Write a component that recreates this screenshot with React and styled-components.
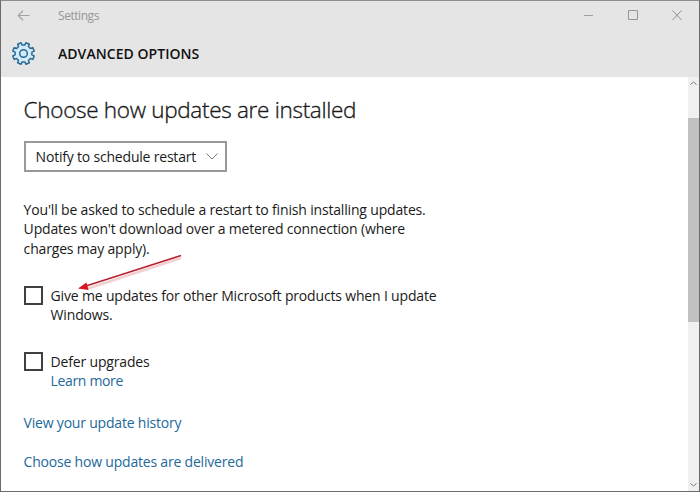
import styled, { createGlobalStyle } from "styled-components";

const GlobalStyle = createGlobalStyle`
  * {
    box-sizing: border-box;
  }

  body {
    margin: 0;
    overflow: hidden;
    font-family: "Open Sans", "Noto Sans", sans-serif;
    color: #1a1a1a;
  }
`;

const Window = styled.div`
  width: 700px;
  height: 492px;
  display: flex;
  flex-direction: column;
  background-color: white;
  border: 1px solid #6b6b6b;
  border-top-color: #8e8e8e;
`;

const Header = styled.header`
  height: 76px;
  background-color: #e5e5e5;
`;

const TitleBar = styled.div`
  height: 29px;
  display: flex;
  align-items: center;
  padding-left: 16px;
  color: #979797;
`;

const WindowTitle = styled.span`
  flex: 1;
  margin-left: 28px;
  font-size: 12px;
  letter-spacing: -0.45px;
`;

const WindowButtons = styled.div`
  display: flex;
  gap: 32px;
  padding-right: 16px;
`;

const PageBar = styled.div`
  height: 47px;
  display: flex;
  align-items: center;
  padding: 0 0 0 10px;
`;

const PageTitle = styled.h1`
  margin: 0 0 0 22px;
  font-size: 14px;
  font-weight: 600;
  letter-spacing: 0.05px;
  color: #111;
`;

const Body = styled.div`
  flex: 1;
  display: flex;
  min-height: 0;
`;

const Content = styled.main`
  flex: 1;
  padding: 17px 0 0 22.6px;
`;

const Heading = styled.h2`
  margin: 0;
  font-size: 22.5px;
  font-weight: 300;
  line-height: 32px;
  letter-spacing: -0.3px;
  white-space: nowrap;
  -webkit-text-stroke: 0.35px #1a1a1a;
`;

const Select = styled.button`
  width: 203px;
  height: 31px;
  margin-top: 15px;
  padding: 0 7px 1px 10px;
  display: flex;
  align-items: center;
  justify-content: space-between;
  border: 2px solid #999;
  background-color: white;
  color: inherit;
  font-family: inherit;
  font-size: 14px;
  letter-spacing: -0.2px;
  white-space: nowrap;
`;

const Text = styled.p`
  margin: 0;
  font-size: 14px;
  line-height: 19.4px;
  letter-spacing: -0.17px;
  white-space: nowrap;
`;

const Line = styled.span`
  display: block;
`;

const Description = styled(Text)`
  margin-top: 28px;
`;

const Option = styled.div`
  display: flex;
  gap: 8px;
  margin-top: ${(props) => props.$top}px;
`;

const Checkbox = styled.span`
  width: 19px;
  height: 19px;
  border: 2px solid #404040;
  background-color: white;
`;

const Link = styled.a`
  display: block;
  margin-top: ${(props) => props.$top || 0}px;
  font-size: 14px;
  line-height: 19.4px;
  letter-spacing: ${(props) => props.$spacing || -0.2}px;
  color: #22699a;
  white-space: nowrap;
`;

const Scrollbar = styled.div`
  width: 11px;
  display: flex;
  flex-direction: column;
  align-items: center;
  justify-content: space-between;
  background-color: #f0f0f0;
`;

const Track = styled.div`
  flex: 1;
  width: 100%;
  padding-top: 33px;
`;

const Thumb = styled.div`
  height: 204px;
  background-color: #c1c1c1;
`;

const ScrollButton = styled.div`
  padding: ${(props) => (props.$down ? "0 0 4px" : "2px 0 0")};
  line-height: 0;
`;

const Pointer = styled.svg`
  position: absolute;
  left: 74px;
  top: 250px;
  pointer-events: none;
`;

// outline of a cog with 8 teeth around (12, 12)
const cogPath = () => {
  const point = (radius, degrees) => {
    const angle = (degrees * Math.PI) / 180;
    return `${(12 + radius * Math.cos(angle)).toFixed(2)} ${(
      12 +
      radius * Math.sin(angle)
    ).toFixed(2)}`;
  };
  let d = "";
  for (let i = 0; i < 8; i++) {
    const a = i * 45 + 22.5;
    d += `${i ? "L" : "M"}${point(8.5, a - 13)}L${point(11, a - 10)}`;
    d += `L${point(11, a + 10)}L${point(8.5, a + 13)}`;
  }
  return d + "Z";
};

const CogIcon = () => (
  <svg width="25" height="25" viewBox="-0.5 -0.5 25 25" fill="#d3eaf8">
    <path
      d={cogPath()}
      stroke="#2c6b96"
      strokeWidth="1.5"
      strokeLinejoin="round"
    />
    <circle cx="12" cy="12" r="3.8" stroke="#2c6b96" strokeWidth="1.5" />
  </svg>
);

const BackIcon = () => (
  <svg width="13" height="11" fill="none" stroke="#a3a3a3" strokeWidth="1.2">
    <path d="M12.5 5.5H1M6 .8L1.2 5.5L6 10.2" />
  </svg>
);

const Chevron = ({ width, height, up, color }) => (
  <svg width={width} height={height} fill="none" stroke={color}>
    <path
      d={
        up
          ? `M.5 ${height - 0.5}L${width / 2} 1L${width - 0.5} ${height - 0.5}`
          : `M.5 .5L${width / 2} ${height - 1}L${width - 0.5} .5`
      }
    />
  </svg>
);

const App = () => {
  return (
    <>
      <GlobalStyle />
      <Window>
        <Header>
          <TitleBar>
            <BackIcon />
            <WindowTitle>Settings</WindowTitle>
            <WindowButtons>
              <svg width="12" height="11" stroke="#a0a0a0">
                <path d="M1 5.5H10" />
              </svg>
              <svg width="12" height="11" fill="none" stroke="#969696">
                <path d="M1.5 .5H10.5V9.5H1.5Z" />
              </svg>
              <svg width="12" height="11" fill="none" stroke="#929292">
                <path d="M1.5 .5L10.5 10M10.5 .5L1.5 10" />
              </svg>
            </WindowButtons>
          </TitleBar>
          <PageBar>
            <CogIcon />
            <PageTitle>ADVANCED OPTIONS</PageTitle>
          </PageBar>
        </Header>
        <Body>
          <Content>
            <Heading>Choose how updates are installed</Heading>
            <Select>
              Notify to schedule restart
              <Chevron width={12} height={7} color="#777" />
            </Select>
            <Description>
              <Line>You'll be asked to schedule a restart to finish installing updates.</Line>
              <Line>Updates won't download over a metered connection (where</Line>
              <Line>charges may apply).</Line>
            </Description>
            <Option $top={27.5}>
              <Checkbox />
              <Text>
                <Line>Give me updates for other Microsoft products when I update</Line>
                <Line>Windows.</Line>
              </Text>
            </Option>
            <Option $top={27.3}>
              <Checkbox />
              <div>
                <Text>Defer upgrades</Text>
                <Link $spacing={-0.35}>Learn more</Link>
              </div>
            </Option>
            <Link $top={22.5}>View your update history</Link>
            <Link $top={19}>Choose how updates are delivered</Link>
          </Content>
          <Scrollbar>
            <ScrollButton>
              <Chevron width={7} height={4} up color="#777" />
            </ScrollButton>
            <Track>
              <Thumb />
            </Track>
            <ScrollButton $down>
              <Chevron width={7} height={4} color="#777" />
            </ScrollButton>
          </Scrollbar>
        </Body>
      </Window>
      <Pointer width="112" height="52">
        <path
          d="M14 38.5L107 8"
          stroke="#e8a0a4"
          strokeWidth="2.5"
          opacity="0.5"
        />
        <path d="M12 36L107 5.5" stroke="#b5202c" strokeWidth="1.5" />
        <path d="M4 38.5L12.5 32.5L14.5 40Z" fill="#d8141f" />
      </Pointer>
    </>
  );
};

export default App;
